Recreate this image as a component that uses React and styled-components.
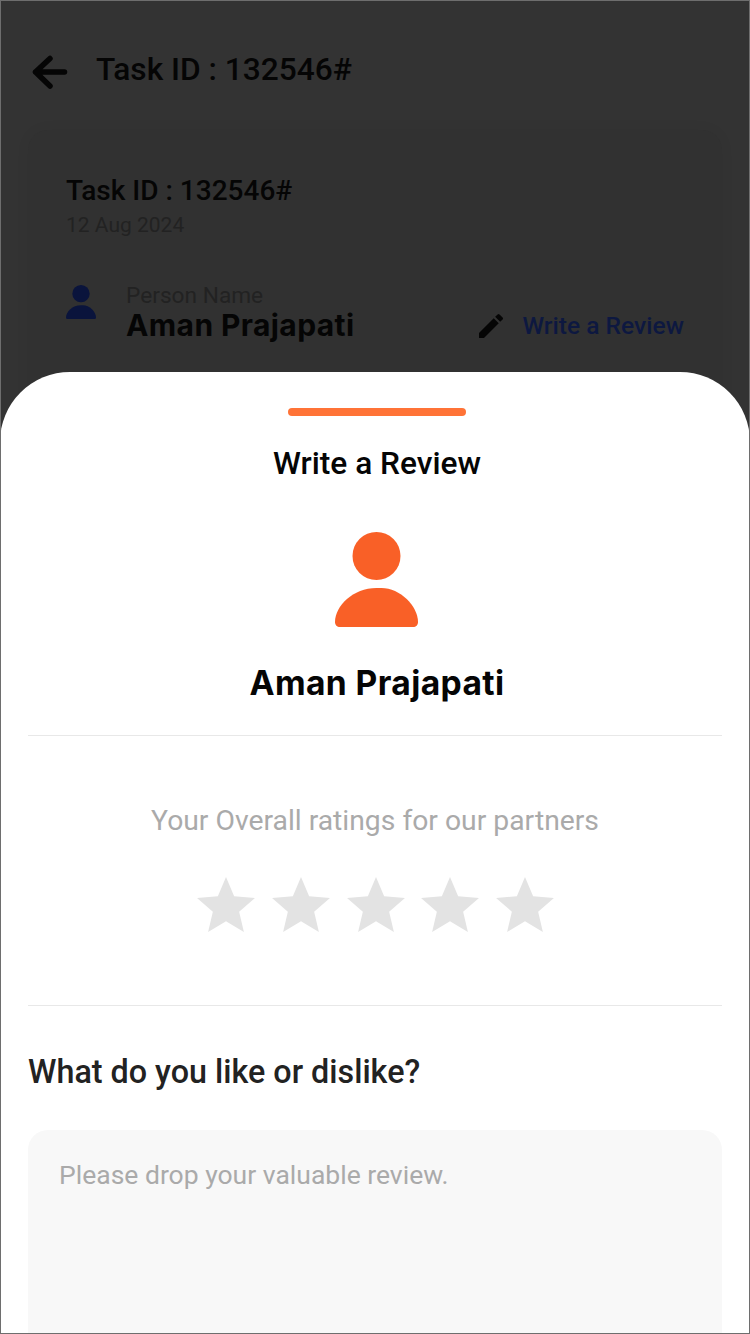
import React from 'react';
import styled, { createGlobalStyle } from 'styled-components';

const STARS = [1, 2, 3, 4, 5];

const PersonIcon = ({ size, color }) => (
  <svg width={size} viewBox="0 0 83 95" fill={color} style={{ display: 'block' }}>
    <circle cx="41.5" cy="24" r="24" />
    <path d="M41.5 56C18 56 0 74 0 90c0 3 2 5 5 5h73c3 0 5-2 5-5 0-16-18-34-36.500-34z" />
  </svg>
);

const App = () => {
  return (
    <Screen>
      <GlobalStyle />
      <Backdrop>
        <Header>
          <BackIcon width="36" height="34" viewBox="0 0 36 34" fill="none" stroke="#050505" strokeWidth="5.5" strokeLinecap="round" strokeLinejoin="round">
            <path d="M32.500 17H3.500M18 3.500L3.500 17 18 31" />
          </BackIcon>
          <HeaderTitle>Task ID : 132546#</HeaderTitle>
        </Header>
        <Card>
          <CardTitle>Task ID : 132546#</CardTitle>
          <CardDate>12 Aug 2024</CardDate>
          <PersonRow>
            <PersonIcon size={30} color="#0a143c" />
            <PersonInfo>
              <PersonLabel>Person Name</PersonLabel>
              <PersonName>Aman Prajapati</PersonName>
            </PersonInfo>
            <ReviewLink>
              <svg width="32" height="32" viewBox="0 0 24 24" fill="#050505">
                <path d="M3 17.250V21h3.750L17.810 9.940l-3.750-3.750L3 17.250zM20.710 7.040a1 1 0 000-1.410l-2.340-2.340a1 1 0 00-1.410 0l-1.830 1.830 3.750 3.750 1.830-1.830z" />
              </svg>
              <ReviewText>Write a Review</ReviewText>
            </ReviewLink>
          </PersonRow>
        </Card>
      </Backdrop>

      <Sheet>
        <Handle />
        <SheetTitle>Write a Review</SheetTitle>
        <Avatar>
          <PersonIcon size={83} color="#f96027" />
        </Avatar>
        <SheetName>Aman Prajapati</SheetName>
        <Divider />
        <RatingBlock>
          <RatingLabel>Your Overall ratings for our partners</RatingLabel>
          <Stars>
            {STARS.map((n) => (
              <svg key={n} width="58" height="55" viewBox="2 2 20 19" fill="#e3e3e3">
                <path d="M12 17.270L18.180 21l-1.640-7.030L22 9.240l-7.190-.610L12 2 9.190 8.630 2 9.240l5.460 4.730L5.820 21z" />
              </svg>
            ))}
          </Stars>
        </RatingBlock>
        <Divider />
        <Question>What do you like or dislike?</Question>
        <ReviewBox>
          <Placeholder>Please drop your valuable review.</Placeholder>
        </ReviewBox>
      </Sheet>
    </Screen>
  );
};

const GlobalStyle = createGlobalStyle`
  html, body {
    margin: 0;
    padding: 0;
    background: #ffffff;
    font-family: Roboto, "Liberation Sans", sans-serif;
  }
  * {
    box-sizing: border-box;
  }
`;

const Screen = styled.div`
  position: relative;
  width: 750px;
  height: 1334px;
  overflow: hidden;
  border: 1px solid #6e6e6e;
`;

const Backdrop = styled.div`
  height: 100%;
  padding: 50px 27px 0;
  background: #333333;
`;

const Header = styled.div`
  display: flex;
  align-items: center;
  gap: 28px;
  height: 38px;
  padding-left: 4px;
`;

const BackIcon = styled.svg`
  flex: none;
  margin-top: 4px;
`;

const HeaderTitle = styled.div`
  font-size: 31.7px;
  font-weight: 500;
  line-height: 38px;
  color: #050505;
`;

const Card = styled.div`
  height: 300px;
  margin-top: 41px;
  padding: 45px 38px 0;
  border-radius: 20px;
  background: #313131;
  box-shadow: 0 0 14px rgba(0, 0, 0, 0.05);
`;

const CardTitle = styled.div`
  font-size: 28px;
  font-weight: 500;
  line-height: 32px;
  color: #050505;
`;

const CardDate = styled.div`
  margin-top: 6px;
  font-size: 21px;
  line-height: 24px;
  color: #222222;
`;

const PersonRow = styled.div`
  display: flex;
  align-items: flex-start;
  margin-top: 48px;
`;

const PersonInfo = styled.div`
  display: flex;
  flex-direction: column;
  margin-left: 30px;
`;

const PersonLabel = styled.div`
  margin-top: -2px;
  font-size: 22.7px;
  line-height: 26px;
  color: #222222;
`;

const PersonName = styled.div`
  font-family: Inter, "Open Sans", sans-serif;
  font-size: 30px;
  font-weight: 700;
  line-height: 32px;
  letter-spacing: 0.4px;
  color: #050505;
`;

const ReviewLink = styled.div`
  display: flex;
  align-items: center;
  gap: 15px;
  margin-left: auto;
  margin-top: 25px;
`;

const ReviewText = styled.div`
  font-size: 24.6px;
  font-weight: 500;
  line-height: 30px;
  color: #0d1840;
`;

const Sheet = styled.div`
  position: absolute;
  left: -1px;
  right: -1px;
  top: 371px;
  bottom: -1px;
  display: flex;
  flex-direction: column;
  align-items: center;
  padding: 36px 28px 0;
  border-radius: 70px 70px 0 0;
  background: #ffffff;
`;

const Handle = styled.div`
  flex: none;
  width: 178px;
  height: 8px;
  margin-left: 4px;
  border-radius: 4px;
  background: #ff7337;
`;

const SheetTitle = styled.div`
  margin: 29px 0 0 4px;
  font-size: 31.7px;
  font-weight: 500;
  line-height: 38px;
  color: #050505;
`;

const Avatar = styled.div`
  flex: none;
  margin: 49px 0 0 3px;
`;

const SheetName = styled.div`
  margin: 35px 0 31px 4px;
  font-family: Inter, "Open Sans", sans-serif;
  font-size: 33.6px;
  font-weight: 700;
  line-height: 42px;
  letter-spacing: 0.4px;
  color: #050505;
`;

const Divider = styled.div`
  flex: none;
  width: 100%;
  height: 1px;
  background: #e8e8e8;
`;

const RatingBlock = styled.div`
  flex: none;
  display: flex;
  flex-direction: column;
  align-items: center;
  height: 269px;
`;

const RatingLabel = styled.div`
  margin-top: 67px;
  font-size: 28.3px;
  line-height: 36px;
  color: #aaaaaa;
`;

const Stars = styled.div`
  display: flex;
  gap: 16.700px;
  margin: 38px 0 0 1px;
`;

const Question = styled.div`
  align-self: flex-start;
  margin-top: 46px;
  font-size: 32.3px;
  font-weight: 500;
  line-height: 40px;
  color: #222222;
`;

const ReviewBox = styled.div`
  flex: none;
  width: 100%;
  height: 300px;
  margin-top: 38px;
  padding: 28px 31px;
  border-radius: 20px;
  background: #f8f8f8;
`;

const Placeholder = styled.div`
  font-size: 26.5px;
  line-height: 34px;
  color: #aaaaaa;
`;

export default App;
